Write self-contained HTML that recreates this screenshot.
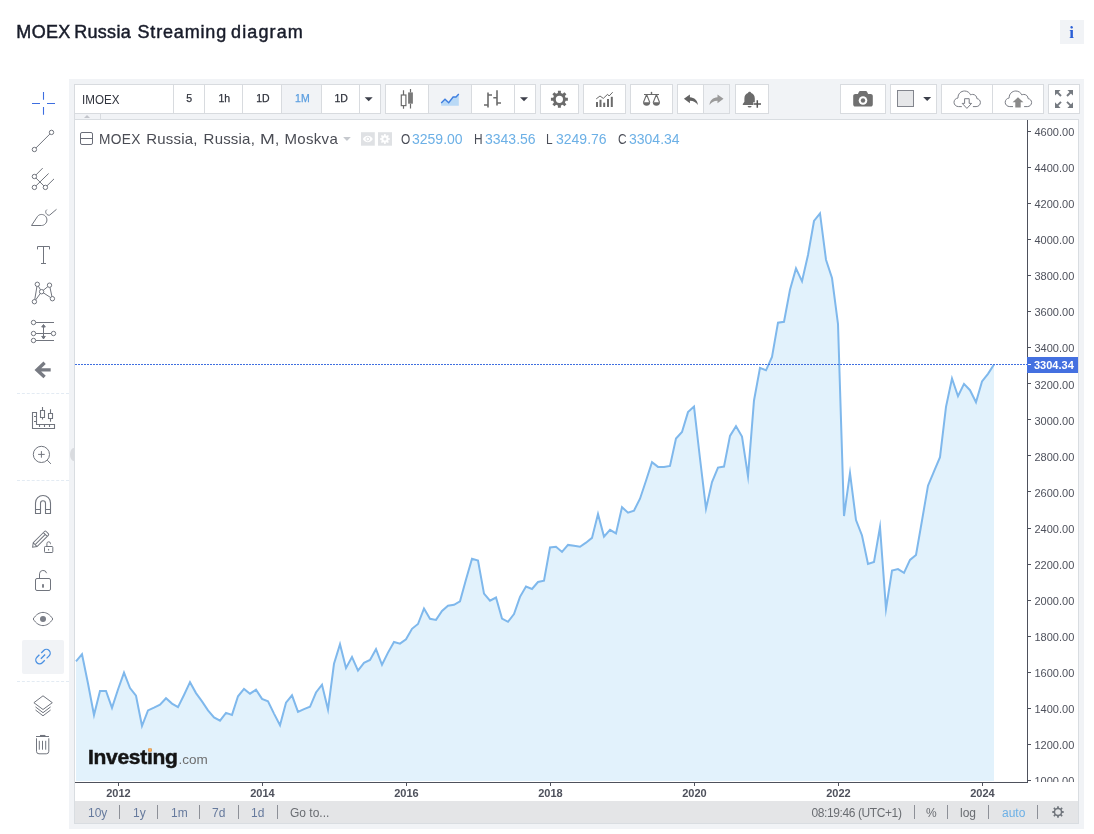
<!DOCTYPE html>
<html lang="en">
<head>
<meta charset="utf-8">
<title>MOEX Russia Streaming diagram</title>
<style>
*{box-sizing:border-box;margin:0;padding:0}
html,body{width:1094px;height:834px;background:#fff;overflow:hidden}
body{position:relative;will-change:transform;font-family:"Liberation Sans",sans-serif;color:#4a4d57}
.abs{position:absolute}
svg{display:block;overflow:visible}
#title{left:17.5px;top:21px;font-size:18px;font-weight:normal;color:#181c2a;-webkit-text-stroke:0.45px #181c2a;line-height:22px;white-space:pre}
#title span{position:absolute;top:0}
#info{left:1060px;top:20px;width:24px;height:24px;background:#f1f3f6;color:#2b5fd6;font-family:"Liberation Serif",serif;font-weight:bold;font-size:17px;line-height:25px;text-align:center;padding-right:1px}
#wrap{left:69px;top:79px;width:1015px;height:750px;background:#f1f3f6}
#pane{left:74px;top:119px;width:1005px;height:705px;background:#fff;border:1px solid #d9dde1}
.tb{position:absolute;top:84px;height:30px;background:#fff;border:1px solid #d8dbdf}
.tb span{position:absolute;top:0;height:28px;line-height:28px;font-size:11px;color:#30333d;text-align:center;font-weight:bold}
.tb u{position:absolute;top:0;width:1px;height:28px;background:#d8dbdf}
.tb em{position:absolute;top:0;height:28px;background:#f1f3f6}
.tb svg{position:absolute}
#legend{left:0;top:0;width:0;height:0}
#legend span{position:absolute;white-space:nowrap;top:129px;line-height:20px}
#legend .lbox{left:80px;top:132px;width:13px;height:13px;border:1px solid #6a6d78;border-radius:2px}
#legend .lbox:after{content:"";position:absolute;left:0;top:5px;width:11px;height:1px;background:#6a6d78}
#legend .lt{font-size:15px;color:#4a4c54;letter-spacing:0.330px;transform-origin:0 50%}
#legend .lk{font-size:14px;color:#4a4d57;transform:scaleX(0.850);transform-origin:0 50%}
#legend .lv{font-size:14px;color:#6cb0e6}
#logo{left:88px;top:743px;height:28px;white-space:nowrap;line-height:28px}
#logo b{font-size:21px;color:#141414;letter-spacing:-0.3px;-webkit-text-stroke:0.5px #141414}
#logo span{font-size:13.5px;color:#6e6e6e;letter-spacing:0;margin-left:1px}
#logo i{position:absolute;left:60px;top:4.6px;width:4.4px;height:4.4px;border-radius:50%;background:#f7ad5e}
#bottom{left:75px;top:801px;width:1003px;height:22px;background:#e4e5e7}
#bottom span{position:absolute;top:1px;line-height:22px;font-size:12px;white-space:nowrap}
#bottom .r{color:#667a9d}
#bottom .g{color:#6a6d72}
#bottom .b{color:#6cb0e6}
#bottom i{position:absolute;top:4px;width:1px;height:14px;background:#8d9097}
.tl{position:absolute;top:84px;width:40px;height:28px;line-height:28px;text-align:center;font-size:10.500px;font-weight:normal;-webkit-text-stroke:0.250px;color:#30333d}
.tl.act{color:#5b9ee0}
.sym{left:82px;top:85px;height:28px;line-height:29px;font-size:13.500px;color:#30333d;transform:scaleX(0.860);transform-origin:0 50%}

</style>
</head>
<body>
<div id="title" class="abs"><span style="left:-1.200px;letter-spacing:0.350px">MOEX </span><span style="left:56.700px;letter-spacing:0.300px">Russia </span><span style="left:120px;letter-spacing:0.830px">Streaming </span><span style="left:213.500px;letter-spacing:1.120px">diagram</span></div>
<div id="info" class="abs">i</div>
<div id="wrap" class="abs"></div>
<div class="abs" style="left:22px;top:640px;width:42px;height:34px;background:#f1f3f6;border-radius:2px"></div>
<div class="abs" style="left:17px;top:393px;width:52px;height:0;border-top:1px dashed #e3ebf3"></div>
<div class="abs" style="left:17px;top:480px;width:52px;height:0;border-top:1px dashed #e3ebf3"></div>
<div class="abs" style="left:17px;top:681px;width:52px;height:0;border-top:1px dashed #e3ebf3"></div>
<svg class="abs" style="left:0;top:0" width="70" height="834" viewBox="0 0 70 834" fill="none" stroke="#71757e" stroke-width="1">
<path d="M43.5 92V99.7M43.5 107V114.7M32 103.5H40M47 103.5H55" stroke="#3d6ee0" stroke-width="1.1"/>
<path d="M34.4 149.500L51.500 132.400"/><circle cx="51.5" cy="132.4" r="2.2" fill="#fff"/><circle cx="34.4" cy="149.5" r="2.2" fill="#fff"/>
<path d="M34.400 176.500L42.700 168.100M34.400 176.500L45.400 187.400M34.400 187.400L48.600 173.500M45.400 187.400L54 178.900"/><circle cx="34.4" cy="176.5" r="2.2" fill="#fff"/><circle cx="34.4" cy="187.4" r="2.2" fill="#fff"/><circle cx="45.4" cy="187.4" r="2.2" fill="#fff"/>
<path d="M31.500 225.500L37.600 216.300C39.500 213.900 43.200 213.900 45.300 216C47.500 218.200 47.400 221.800 45.300 223.800C44.200 224.900 43 225.500 41.500 225.500Z"/>
<path d="M46.900 209.600C45.600 210.500 45.300 212.300 46.300 213.700C47.200 215 48.600 215.500 49.700 215.100L56.500 209.300"/>
<path d="M37.500 249.400V246.500H49.500V249.400M43.500 246.500V263.500M41 263.500H46"/>
<path d="M34.400 301.700L37.300 284.300L41.600 291.700L34.400 301.700M41.600 291.700L49.500 285.200L52.400 298.700L41.600 291.700"/>
<circle cx="37.3" cy="284.3" r="2.2" fill="#fff"/>
<circle cx="49.5" cy="285.2" r="2.2" fill="#fff"/>
<circle cx="41.6" cy="291.7" r="2.2" fill="#fff"/>
<circle cx="34.4" cy="301.7" r="2.2" fill="#fff"/>
<circle cx="52.4" cy="298.7" r="2.2" fill="#fff"/>
<path d="M35.700 322.500H54M35.700 333.500H51.300M35.700 340.500H54M43.500 325V338.500"/>
<path d="M41.700 327L43.500 324.500L45.300 327ZM41.700 336.400L43.500 338.900L45.300 336.400Z" fill="#71757e"/>
<circle cx="33.5" cy="322.5" r="2.2" fill="#fff"/>
<circle cx="33.5" cy="333.5" r="2.2" fill="#fff"/>
<circle cx="33.5" cy="340.5" r="2.2" fill="#fff"/>
<circle cx="53.5" cy="333.5" r="2.2" fill="#fff"/>
<path d="M44.600 362.800L37 369.900L44.600 377M37.500 369.900H50.700" stroke="#777a82" stroke-width="3.400" stroke-linejoin="miter"/>
<path d="M32.500 412.500H36.500V424.500H54.500V428.500H32.500ZM34 416.500H36.500M34 421.500H36.500M39.500 424.500V427M44.500 424.500V427M49.500 424.500V427" stroke-width="1.100"/>
<path d="M42.500 407V410.500M42.500 417.500V419.600M40.500 410.500H44.500V417.500H40.500ZM50.500 409.200V413.500M50.500 418.500V421.800M48.500 413.500H52.500V418.500H48.500Z" stroke-width="1.100"/>
<circle cx="41.400" cy="454.400" r="8.100"/><path d="M38.100 454.400H44.700M41.400 451.100V457.700M47.300 460.200L50.900 463.900"/>
<path d="M35.500 513.500V503A7.500 7.500 0 0 1 50.500 503V513.500H45.500V503.200A2.500 2.500 0 0 0 40.500 503.200V513.500ZM35.500 509.500H40.500M45.500 509.500H50.500" stroke-width="1.100"/>
<g transform="translate(32.600 547.200) rotate(-45)"><path d="M0 0L3.600 -2.700H19.500A1.200 1.200 0 0 1 20.700 -1.500V1.500A1.200 1.200 0 0 1 19.500 2.700H3.600ZM3.600 -2.700V2.700M3.600 0H18M18 -2.700V2.700"/></g>
<rect x="44.500" y="546.500" width="8.300" height="6" rx="0.800" fill="#fff"/><path d="M46.900 546.500V543.700A1.800 1.900 0 0 1 50.500 543.700V544.200M48.600 548.900V550.500"/>
<rect x="35.500" y="578.500" width="15" height="12" rx="1.500"/><path d="M39.500 578.500V573.800A3.600 3.600 0 0 1 46.600 573.200M43 584.300V587.600" /><path d="M43 584.300V587.600" stroke-width="1.600"/>
<path d="M33.200 619C36 614.500 39.500 612.400 43 612.400C46.500 612.400 50 614.500 52.800 619C50 623.500 46.500 625.600 43 625.600C39.500 625.600 36 623.500 33.200 619Z"/><circle cx="43" cy="619.100" r="3" fill="#7b7f88" stroke="none"/>
<g transform="translate(43 656.600) rotate(-45)" stroke="#4a90e2" stroke-width="1.300"><path d="M-1.300 -3.800H-4.800A3.800 3.800 0 0 0 -4.800 3.800H-1.300M1.300 -3.800H4.800A3.800 3.800 0 0 1 4.800 3.800H1.300M-3 0H3"/></g>
<path d="M43 695.800L52.300 702.700L43 709.500L33.900 702.700ZM35.500 706.900L43 712.700L50.600 706.900M35.500 710L43 715.800L50.600 710"/>
<path d="M36 736.500H49M36.500 738.300V751.300A2.500 2.500 0 0 0 39 753.800H46.300A2.500 2.500 0 0 0 48.800 751.300V738.300M39.300 740.800V749.700M42.500 740.800V749.700M45.700 740.800V749.700"/><path d="M40 735.600H45.400" stroke-width="1.300"/>
</svg>
<div class="abs" style="left:70.300px;top:448px;width:3.700px;height:13px;background:#d9dbdf;border-radius:100% 0 0 100%/50% 0 0 50%"></div>

<div class="tb" style="left:74px;width:307px"><em style="left:207px;width:39px"></em><u style="left:98px"></u><u style="left:129px"></u><u style="left:167px"></u><u style="left:206px"></u><u style="left:246px"></u><u style="left:284px"></u></div>
<div class="tb" style="left:385px;width:151px"><em style="left:43px;width:42px"></em><u style="left:42px"></u><u style="left:85px"></u><u style="left:128px"></u></div>
<div class="tb" style="left:540px;width:39px"></div>
<div class="tb" style="left:583px;width:43px"></div>
<div class="tb" style="left:630px;width:43px"></div>
<div class="tb" style="left:677px;width:53px"><em style="left:26px;width:25px"></em><u style="left:25px"></u></div>
<div class="tb" style="left:735px;width:34px"></div>
<div class="tb" style="left:840px;width:46px"></div>
<div class="tb" style="left:890px;width:47px"></div>
<div class="tb" style="left:941px;width:103px"><u style="left:50px"></u></div>
<div class="tb" style="left:1048px;width:32px"></div>
<span class="sym abs">IMOEX</span>
<span class="tl " style="left:169.2px">5</span>
<span class="tl " style="left:204.3px">1h</span>
<span class="tl " style="left:243.0px">1D</span>
<span class="tl act" style="left:282.4px">1M</span>
<span class="tl " style="left:321.2px">1D</span>
<div class="abs" style="left:74px;top:113px;width:27px;height:7px;border:1px solid #d8dbdf;background:#f1f3f6"></div>
<div class="abs" style="left:84px;top:115px;width:0;height:0;border-left:3.5px solid transparent;border-right:3.5px solid transparent;border-bottom:3.5px solid #c3c6cc"></div>
<svg class="abs" style="left:0;top:0" width="1094" height="130" viewBox="0 0 1094 130">
<path d="M364.7 97.2 h8 l-4.0 4 z" fill="#3c3f4a"/>
<path d="M520.0 97.2 h8 l-4.0 4 z" fill="#3c3f4a"/>
<path d="M923.2 97.1 h8 l-4.0 4 z" fill="#3c3f4a"/>
<g stroke="#6b6b6b" stroke-width="1.2" fill="none"><path d="M403.5 90.2V95M403.5 105.6V108.8M410.5 89V92.4M410.5 103.7V108.5"/><rect x="401.3" y="95" width="4.6" height="10.6" fill="#fff"/></g>
<rect x="408.1" y="92.4" width="4.8" height="11.3" fill="#7a7a7a"/>
<path d="M441.2 102.9L445 99.2L448.7 102.7L453.1 97H456L458.8 94V105.8H441.2Z" fill="#b9d9f6"/>
<path d="M441.2 102.9L445 99.2L448.7 102.7L453.1 97H456L458.8 94" fill="none" stroke="#3f7fe0" stroke-width="1.4"/>
<path d="M488 92.4V107.5M488 95H492M484 105H488M497 90.2V105.6M493.3 97.8H497M497 103H501" fill="none" stroke="#6b6b6b" stroke-width="1.6"/>
<path d="M567.87 97.82L567.87 100.78L565.62 100.79L564.86 102.64L566.44 104.25L564.35 106.34L562.74 104.76L560.89 105.52L560.88 107.77L557.92 107.77L557.91 105.52L556.06 104.76L554.45 106.34L552.36 104.25L553.94 102.64L553.18 100.79L550.93 100.78L550.93 97.82L553.18 97.81L553.94 95.96L552.36 94.35L554.45 92.26L556.06 93.84L557.91 93.08L557.92 90.83L560.88 90.83L560.89 93.08L562.74 93.84L564.35 92.26L566.44 94.35L564.86 95.96L565.62 97.81ZM555.80 99.30 a3.60 3.60 0 1 0 7.20 0 a3.60 3.60 0 1 0 -7.20 0Z" fill="#6b6b6b" fill-rule="evenodd"/>
<g fill="#6b6b6b"><rect x="596" y="102" width="2" height="5"/><rect x="599.5" y="99.7" width="2" height="7.3"/><rect x="603.2" y="102.7" width="2" height="4.3"/><rect x="607" y="99" width="2" height="8"/><rect x="610.8" y="96.8" width="2" height="10.2"/></g>
<path d="M596.2 98.9L600 96L603.3 98.4L607.6 94.3L609.1 96L612.7 92.2" fill="none" stroke="#6b6b6b" stroke-width="1"/>
<g fill="none" stroke="#6b6b6b" stroke-width="1.1"><path d="M644 94.5H659M651.5 92.2V94.5"/><path d="M646.6 94.5L643.4 102.5M646.6 94.5L649.8 102.5M656.4 94.5L653.2 102.5M656.4 94.5L659.6 102.5"/></g>
<path d="M643 102.3h7.2a3.6 3.4 0 0 1-7.2 0zM652.8 102.3h7.2a3.6 3.4 0 0 1-7.2 0z" fill="#6b6b6b"/>
<path d="M650.3 93.2l1.2-1.6 1.2 1.6z" fill="#6b6b6b"/>
<path d="M0 4.2L6 0V2.6C10.5 2.8 13.6 5.6 14 10.4C12.2 7.6 9.8 6.2 6 6.1V8.6Z" fill="#636363" transform="translate(683.9 94.6)"/>
<path d="M0 4.2L6 0V2.6C10.5 2.8 13.6 5.6 14 10.4C12.2 7.6 9.8 6.2 6 6.1V8.6Z" fill="#9b9b9b" transform="translate(723.5 94.6) scale(-1 1)"/>
<path d="M749.6 91.7c0.9 0 1.5 0.6 1.6 1.4c2.3 0.7 3.6 2.7 3.6 5.3v3.4l1.6 2.2v0.9h-13.6v-0.9l1.6-2.2v-3.4c0-2.6 1.3-4.6 3.6-5.3c0.1-0.8 0.7-1.4 1.6-1.4z" fill="#6b6b6b"/>
<path d="M747.6 106h4a2 1.6 0 0 1-4 0z" fill="#6b6b6b"/>
<path d="M753.2 103.9H761.4M757.3 99.9V107.9" stroke="#fff" stroke-width="3.4" fill="none"/>
<path d="M753.6 103.9H761M757.3 100.2V107.7" stroke="#555" stroke-width="1.5" fill="none"/>
<path d="M855.3 93.9h2.6l1.2-2.3c0.2-0.4 0.6-0.6 1-0.6h5.8c0.4 0 0.8 0.2 1 0.6l1.2 2.3h2.6c1.2 0 2.1 0.9 2.1 2.1v8.5c0 1.2-0.9 2.1-2.1 2.1h-15.4c-1.2 0-2.1-0.9-2.1-2.1v-8.5c0-1.2 0.9-2.1 2.1-2.1z" fill="#707070"/>
<circle cx="863" cy="100.5" r="4.3" fill="#fff"/><circle cx="863" cy="100.5" r="2.2" fill="#707070"/>
<rect x="897.5" y="90.5" width="16" height="16" fill="#e6e7e9" stroke="#82858d" stroke-width="1"/>
<path d="M961.8 106.6h-3.2c-2.6 0-4.6-1.9-4.6-4.3c0-2.3 1.8-4.1 4-4.3c0-0.2 0-0.4 0-0.6c0-3.5 2.9-6.4 6.6-6.4c2.7 0 5 1.6 6 3.9c0.6-0.3 1.3-0.5 2-0.5c2.4 0 4.300 1.900 4.300 4.2c2 0.300 3.500 1.900 3.500 3.900c0 2.300-1.900 4.100-4.300 4.100h-3.200" fill="none" stroke="#7a7d85" stroke-width="1"/>
<path d="M964.6 98.7h4.600v4.700h2.400l-4.700 5l-4.700-5h2.400z" fill="#fff" stroke="#7a7d85" stroke-width="1" stroke-linejoin="round"/>
<path d="M1013.0 106.6h-3.2c-2.6 0-4.6-1.9-4.6-4.3c0-2.3 1.8-4.1 4-4.3c0-0.2 0-0.4 0-0.6c0-3.5 2.9-6.4 6.6-6.4c2.7 0 5 1.6 6 3.9c0.6-0.3 1.3-0.5 2-0.5c2.4 0 4.300 1.900 4.300 4.2c2 0.300 3.500 1.900 3.500 3.900c0 2.300-1.900 4.100-4.300 4.100h-3.200" fill="none" stroke="#7a7d85" stroke-width="1"/>
<path d="M1018 97.200l5.400 5h-2.700v5.300h-5.400v-5.300h-2.700z" fill="#8a8a8a"/>
<path d="M1055 90L1060.6 90L1055 95.6Z" fill="#757a80"/><path d="M1057 92L1061 96" stroke="#757a80" stroke-width="2" fill="none"/>
<path d="M1073 90L1067.4 90L1073 95.6Z" fill="#757a80"/><path d="M1071 92L1067 96" stroke="#757a80" stroke-width="2" fill="none"/>
<path d="M1055 107.9L1060.6 107.9L1055 102.30000000000001Z" fill="#757a80"/><path d="M1057 105.9L1061 101.9" stroke="#757a80" stroke-width="2" fill="none"/>
<path d="M1073 107.9L1067.4 107.9L1073 102.30000000000001Z" fill="#757a80"/><path d="M1071 105.9L1067 101.9" stroke="#757a80" stroke-width="2" fill="none"/>
</svg>

<div id="pane" class="abs"></div>
<svg class="abs" id="chart" style="left:0;top:0" width="1094" height="834" viewBox="0 0 1094 834">
<defs><clipPath id="cp"><rect x="75" y="120" width="952" height="662"/></clipPath><clipPath id="ca"><rect x="1028" y="120" width="50" height="662"/></clipPath></defs>
<g clip-path="url(#cp)">
<path d="M76,781 L76,661.3 L82,654.2 L88,683.5 L94,715 L100,690.9 L106,690.9 L112,707.8 L118,689.5 L124,672.6 L130,688 L136,695.7 L142,726 L148,710.4 L154,707.6 L160,704.6 L166,698.2 L172,703.6 L178,707.2 L184,695 L190,682.2 L196,693.1 L202,701.4 L208,710.4 L214,717.4 L220,720.6 L226,712.9 L232,714.9 L238,696.3 L244,688.9 L250,693.7 L256,689.7 L262,698.9 L268,701.2 L274,713.6 L280,725.3 L286,702.7 L292,695.3 L298,711.9 L304,709.1 L310,706.8 L316,692.5 L322,684.7 L328,709.6 L334,663.8 L340,644.3 L346,668 L352,657.1 L358,670.6 L364,662.9 L370,659.9 L376,649.2 L382,664.8 L388,652.6 L394,642 L400,643.6 L406,639.3 L412,628.8 L418,624 L424,608.6 L430,618.8 L436,619.9 L442,610.9 L448,605.8 L454,604.8 L460,601.3 L466,579.6 L472,558.8 L478,560.6 L484,593.6 L490,600.7 L496,597.5 L502,618.6 L508,621.8 L514,614.1 L520,596.8 L526,586.6 L532,589 L538,582 L544,580.7 L550,547.5 L556,546.8 L562,551.9 L568,544.9 L574,545.8 L580,546.8 L586,542.7 L592,537.9 L598,514 L604,536.6 L610,529.8 L616,533.4 L622,507.2 L628,512.7 L634,510.6 L640,498.7 L646,480.7 L652,462.1 L658,466.9 L664,466.9 L670,465.9 L676,438.6 L682,432 L688,412.1 L694,406.6 L700,458.5 L706,508.7 L712,482 L718,467.6 L724,466.6 L730,435.9 L736,426.2 L742,436.5 L748,476.2 L754,400.5 L760,367.8 L766,370.3 L772,357 L778,322.7 L784,321.8 L790,289.7 L796,268.4 L802,281.3 L808,255 L814,221 L820,213.4 L826,259.7 L832,278 L838,324 L844,516 L850,473 L856,520.1 L862,535.5 L868,564 L874,562 L880,527 L886,608.9 L892,570.6 L898,569.1 L904,572.8 L910,559.9 L916,554.9 L922,520.5 L928,485.7 L934,471.3 L940,457.2 L946,406.9 L952,378.5 L958,396.2 L964,383.9 L970,390.2 L976,402.3 L982,381.5 L988,373.8 L994,364.5 L994,781 Z" fill="#e2f2fc"/>
<polyline points="76,661.3 82,654.2 88,683.5 94,715 100,690.9 106,690.9 112,707.8 118,689.5 124,672.6 130,688 136,695.7 142,726 148,710.4 154,707.6 160,704.6 166,698.2 172,703.6 178,707.2 184,695 190,682.2 196,693.1 202,701.4 208,710.4 214,717.4 220,720.6 226,712.9 232,714.9 238,696.3 244,688.9 250,693.7 256,689.7 262,698.9 268,701.2 274,713.6 280,725.3 286,702.7 292,695.3 298,711.9 304,709.1 310,706.8 316,692.5 322,684.7 328,709.6 334,663.8 340,644.3 346,668 352,657.1 358,670.6 364,662.9 370,659.9 376,649.2 382,664.8 388,652.6 394,642 400,643.6 406,639.3 412,628.8 418,624 424,608.6 430,618.8 436,619.9 442,610.9 448,605.8 454,604.8 460,601.3 466,579.6 472,558.8 478,560.6 484,593.6 490,600.7 496,597.5 502,618.6 508,621.8 514,614.1 520,596.8 526,586.6 532,589 538,582 544,580.7 550,547.5 556,546.8 562,551.9 568,544.9 574,545.8 580,546.8 586,542.7 592,537.9 598,514 604,536.6 610,529.8 616,533.4 622,507.2 628,512.7 634,510.6 640,498.7 646,480.7 652,462.1 658,466.9 664,466.9 670,465.9 676,438.6 682,432 688,412.1 694,406.6 700,458.5 706,508.7 712,482 718,467.6 724,466.6 730,435.9 736,426.2 742,436.5 748,476.2 754,400.5 760,367.8 766,370.3 772,357 778,322.7 784,321.8 790,289.7 796,268.4 802,281.3 808,255 814,221 820,213.4 826,259.7 832,278 838,324 844,516 850,473 856,520.1 862,535.5 868,564 874,562 880,527 886,608.9 892,570.6 898,569.1 904,572.8 910,559.9 916,554.9 922,520.5 928,485.7 934,471.3 940,457.2 946,406.9 952,378.5 958,396.2 964,383.9 970,390.2 976,402.3 982,381.5 988,373.8 994,364.5" fill="none" stroke="#7fb8ec" stroke-width="2" stroke-linejoin="miter" stroke-miterlimit="10"/>
</g>
<line x1="75" y1="364.5" x2="1027" y2="364.5" stroke="#3f6fe0" stroke-width="1" stroke-dasharray="2 1" shape-rendering="crispEdges"/>
<rect x="1027" y="120" width="1" height="663" fill="#4e515c"/>
<rect x="75" y="782" width="953" height="1" fill="#4e515c"/>
<g clip-path="url(#ca)" font-family="'Liberation Sans',sans-serif" font-size="11" fill="#4e515c">
<rect x="1028" y="131" width="3" height="1" fill="#4e515c"/>
<text x="1034.5" y="136">4600.00</text>
<rect x="1028" y="167" width="3" height="1" fill="#4e515c"/>
<text x="1034.5" y="172.1">4400.00</text>
<rect x="1028" y="203" width="3" height="1" fill="#4e515c"/>
<text x="1034.5" y="208.1">4200.00</text>
<rect x="1028" y="239" width="3" height="1" fill="#4e515c"/>
<text x="1034.5" y="244.2">4000.00</text>
<rect x="1028" y="275" width="3" height="1" fill="#4e515c"/>
<text x="1034.5" y="280.3">3800.00</text>
<rect x="1028" y="311" width="3" height="1" fill="#4e515c"/>
<text x="1034.5" y="316.3">3600.00</text>
<rect x="1028" y="347" width="3" height="1" fill="#4e515c"/>
<text x="1034.5" y="352.4">3400.00</text>
<rect x="1028" y="383" width="3" height="1" fill="#4e515c"/>
<text x="1034.5" y="388.5">3200.00</text>
<rect x="1028" y="419" width="3" height="1" fill="#4e515c"/>
<text x="1034.5" y="424.6">3000.00</text>
<rect x="1028" y="455" width="3" height="1" fill="#4e515c"/>
<text x="1034.5" y="460.6">2800.00</text>
<rect x="1028" y="491" width="3" height="1" fill="#4e515c"/>
<text x="1034.5" y="496.7">2600.00</text>
<rect x="1028" y="528" width="3" height="1" fill="#4e515c"/>
<text x="1034.5" y="532.8">2400.00</text>
<rect x="1028" y="564" width="3" height="1" fill="#4e515c"/>
<text x="1034.5" y="568.8">2200.00</text>
<rect x="1028" y="600" width="3" height="1" fill="#4e515c"/>
<text x="1034.5" y="604.9">2000.00</text>
<rect x="1028" y="636" width="3" height="1" fill="#4e515c"/>
<text x="1034.5" y="641">1800.00</text>
<rect x="1028" y="672" width="3" height="1" fill="#4e515c"/>
<text x="1034.5" y="677">1600.00</text>
<rect x="1028" y="708" width="3" height="1" fill="#4e515c"/>
<text x="1034.5" y="713.1">1400.00</text>
<rect x="1028" y="744" width="3" height="1" fill="#4e515c"/>
<text x="1034.5" y="749.2">1200.00</text>
<rect x="1028" y="780" width="3" height="1" fill="#4e515c"/>
<text x="1034.5" y="785.3">1000.00</text>
</g>
<rect x="1027" y="357" width="51" height="16" fill="#4470e0"/>
<rect x="1028" y="364" width="3" height="1" fill="#fff"/>
<text x="1034" y="369" font-family="'Liberation Sans',sans-serif" font-size="11" font-weight="bold" fill="#fff">3304.34</text>
<g font-family="'Liberation Sans',sans-serif" font-size="11" font-weight="bold" fill="#4e515c" text-anchor="middle">
<rect x="118" y="783" width="1" height="3" fill="#4e515c"/>
<text x="118.5" y="796.8">2012</text>
<rect x="262" y="783" width="1" height="3" fill="#4e515c"/>
<text x="262.5" y="796.8">2014</text>
<rect x="406" y="783" width="1" height="3" fill="#4e515c"/>
<text x="406.5" y="796.8">2016</text>
<rect x="550" y="783" width="1" height="3" fill="#4e515c"/>
<text x="550.5" y="796.8">2018</text>
<rect x="694" y="783" width="1" height="3" fill="#4e515c"/>
<text x="694.5" y="796.8">2020</text>
<rect x="838" y="783" width="1" height="3" fill="#4e515c"/>
<text x="838.5" y="796.8">2022</text>
<rect x="982" y="783" width="1" height="3" fill="#4e515c"/>
<text x="982.5" y="796.8">2024</text>
</g>
</svg>
<div id="legend" class="abs">
<span class="lbox"></span>
<span class="lt" style="left:98.500px;transform:scaleX(0.915)">MOEX </span><span class="lt" style="left:146.300px;letter-spacing:0.200px">Russia, </span><span class="lt" style="left:203.600px;letter-spacing:0.200px">Russia, </span><span class="lt" style="left:259.600px;transform:scaleX(1.180)">M</span><span class="lt" style="left:275px">, </span><span class="lt" style="left:284.400px">Moskva</span>
<svg class="abs" style="left:340px;top:130px" width="56" height="18" viewBox="340 130 56 18"><path d="M343.100 137.100h7.700l-3.850 3.800z" fill="#c6c9ce"/><rect x="361" y="132.200" width="13.800" height="13.500" fill="#dfe1e4"/><path d="M362.800 139c1.400-2.200 3.100-3.300 5-3.300s3.600 1.100 5 3.300c-1.400 2.200-3.100 3.300-5 3.300s-3.600-1.100-5-3.300z" fill="#fff"/><circle cx="367.800" cy="139" r="1.800" fill="none" stroke="#dfe1e4" stroke-width="1"/><rect x="378" y="132.200" width="14" height="13.500" fill="#dfe1e4"/><path d="M384.12 134.06L385.68 134.06L385.76 135.40L386.83 135.85L387.84 134.95L388.95 136.06L388.05 137.07L388.50 138.14L389.84 138.22L389.84 139.78L388.50 139.86L388.05 140.93L388.95 141.94L387.84 143.05L386.83 142.15L385.76 142.60L385.68 143.94L384.12 143.94L384.04 142.60L382.97 142.15L381.96 143.05L380.85 141.94L381.75 140.93L381.30 139.86L379.96 139.78L379.96 138.22L381.30 138.14L381.75 137.07L380.85 136.06L381.96 134.95L382.97 135.85L384.04 135.40ZM383.30 139.00 a1.60 1.60 0 1 0 3.20 0 a1.60 1.60 0 1 0 -3.20 0Z" fill="#fff" fill-rule="evenodd"/></svg>
<span class="lk" style="left:400.500px">O</span><span class="lv" style="left:412px">3259.00</span>
<span class="lk" style="left:473.500px">H</span><span class="lv" style="left:485px">3343.56</span>
<span class="lk" style="left:546px">L</span><span class="lv" style="left:556px">3249.76</span>
<span class="lk" style="left:618px">C</span><span class="lv" style="left:629px">3304.34</span>
</div>
<div id="logo" class="abs"><b>Investing</b><span>.com</span><i></i></div>
<div id="bottom" class="abs">
<span class="r" style="left:13px">10y</span><i style="left:44px"></i>
<span class="r" style="left:58px">1y</span><i style="left:82px"></i>
<span class="r" style="left:96px">1m</span><i style="left:124px"></i>
<span class="r" style="left:137px">7d</span><i style="left:163px"></i>
<span class="r" style="left:176px">1d</span><i style="left:202px"></i>
<span class="g" style="left:215px">Go to...</span>
<span class="g" style="left:736.500px;letter-spacing:-0.400px">08:19:46 (UTC+1)</span><i style="left:839px"></i>
<span class="g" style="left:851px">%</span><i style="left:872px"></i>
<span class="g" style="left:885px">log</span><i style="left:913px"></i>
<span class="b" style="left:927px">auto</span><i style="left:962px"></i>
<svg style="position:absolute;left:976px;top:4px" width="14" height="14" viewBox="-7 -7 14 14"><path d="M-0.79 -5.85L0.79 -5.85L0.91 -4.20L2.33 -3.61L3.58 -4.69L4.69 -3.58L3.61 -2.33L4.20 -0.91L5.85 -0.79L5.85 0.79L4.20 0.91L3.61 2.33L4.69 3.58L3.58 4.69L2.33 3.61L0.91 4.20L0.79 5.85L-0.79 5.85L-0.91 4.20L-2.33 3.61L-3.58 4.69L-4.69 3.58L-3.61 2.33L-4.20 0.91L-5.85 0.79L-5.85 -0.79L-4.20 -0.91L-3.61 -2.33L-4.69 -3.58L-3.58 -4.69L-2.33 -3.61L-0.91 -4.20ZM-2.80 0a2.80 2.80 0 1 0 5.60 0a2.80 2.80 0 1 0 -5.60 0Z" fill="#6f747b" fill-rule="evenodd"/></svg>
</div>
</body>
</html>
